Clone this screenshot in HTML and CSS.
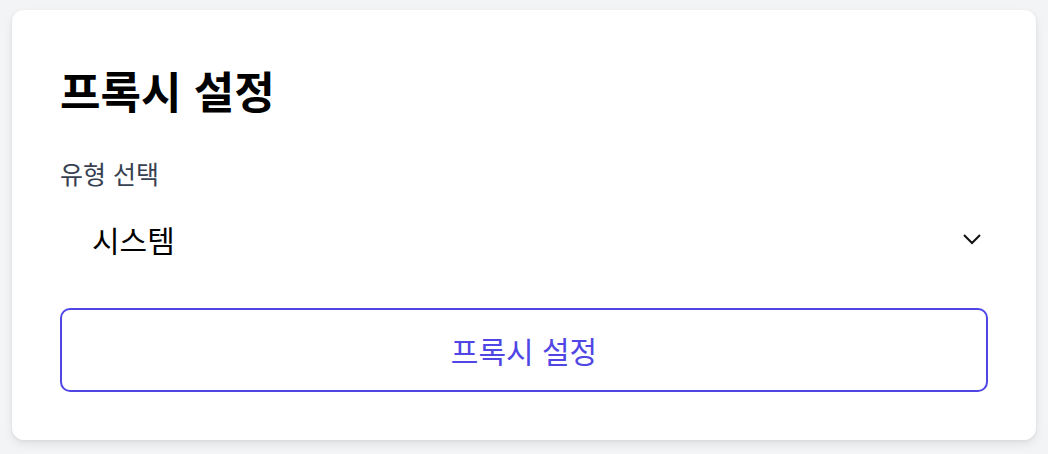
FILE: index.html
```html
<!DOCTYPE html>
<html lang="ko">
<head>
<meta charset="utf-8">
<link rel="stylesheet" href="styles.css">
</head>
<body>
<div class="card">
  <h1 class="title">프록시 설정</h1>
  <div class="label">유형 선택</div>
  <div class="select">
    <span class="select-value">시스템</span>
    <svg class="chevron" width="20" height="12" viewBox="0 0 20 12"><polyline points="2,2 10,10 18,2" fill="none" stroke="#111" stroke-width="2"/></svg>
  </div>
  <button class="btn">프록시 설정</button>
</div>
</body>
</html>
```
FILE: styles.css
```css
html, body { margin: 0; padding: 0; }
body {
  background: #f3f4f6;
  width: 1048px;
  height: 454px;
  padding: 10px 12px 0 12px;
  box-sizing: border-box;
  font-family: "Noto Sans CJK KR", "Noto Sans", sans-serif;
}
.card {
  background: #fff;
  border-radius: 12px;
  box-shadow: 0 4px 10px rgba(0,0,0,0.08), 0 1px 3px rgba(0,0,0,0.06);
  padding: 48px;
  height: 430px;
  box-sizing: border-box;
  display: flex;
  flex-direction: column;
}
.title {
  margin: 0;
  font-size: 44px;
  font-weight: 700;
  line-height: 64px;
  height: 64px;
  color: #000;
}
.label {
  margin-top: 33px;
  font-size: 25px;
  font-weight: 400;
  line-height: 36px;
  color: #374151;
}
.select {
  margin-top: 13px;
  height: 70px;
  display: flex;
  align-items: center;
  justify-content: space-between;
  padding: 0 6px 0 32px;
}
.select-value {
  font-size: 30px;
  font-weight: 400;
  color: #000;
}
.chevron { display: block; }
.btn {
  margin-top: 34px;
  height: 84px;
  border: 2px solid #4f46e5;
  border-radius: 10px;
  background: #fff;
  color: #4f46e5;
  font-family: inherit;
  font-size: 30px;
  font-weight: 400;
  padding: 0;
}
```
